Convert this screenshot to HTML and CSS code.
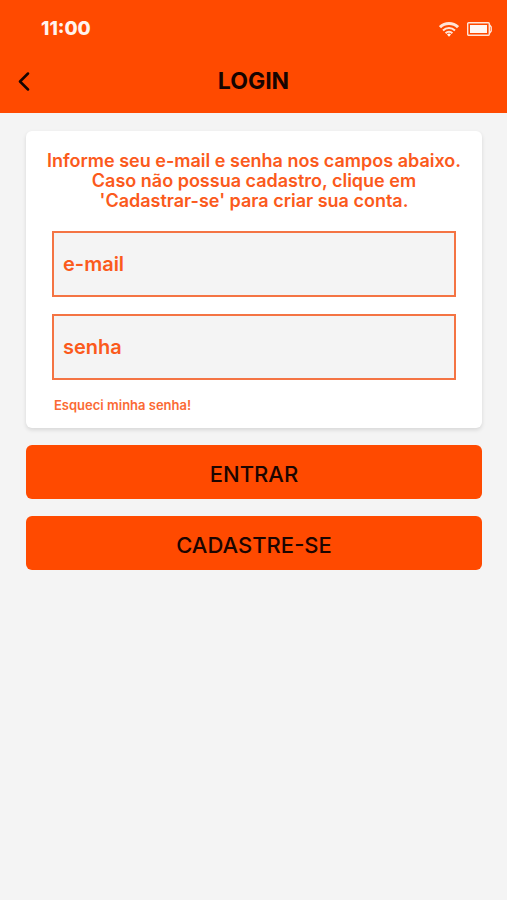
FILE: index.html
```html
<!DOCTYPE html>
<html lang="pt-BR">
<head>
  <meta charset="utf-8">
  <meta name="viewport" content="width=device-width, initial-scale=1">
  <title>Login</title>
  <link rel="stylesheet" href="styles.css">
</head>
<body>
  <header class="header">
    <div class="status">
      <time class="status-time">11:00</time>
      <div class="status-icons">
        <svg class="wifi" viewBox="0 0 20 15" aria-hidden="true">
          <path d="M1 5.2a13 13 0 0 1 18 0" stroke-width="3"/>
          <path d="M4 8.5a8.6 8.6 0 0 1 12 0" stroke-width="2"/>
          <path d="M6.6 11.2a4.8 4.8 0 0 1 6.8 0" stroke-width="2"/>
          <path class="solid" d="M8 12.4a2.9 2.9 0 0 1 4 0L10 14.8z"/>
        </svg>
        <svg class="battery" viewBox="0 0 25 14" aria-hidden="true">
          <rect x=".7" y=".7" width="21.6" height="12.6" rx="1" stroke-width="1.4"/>
          <rect class="solid" x="3" y="3" width="17" height="8"/>
          <path d="M22.3 2.5l1.9 2.5v4l-1.9 2.5" stroke-width="1.4"/>
        </svg>
      </div>
    </div>
    <div class="titlebar">
      <button class="back" type="button" aria-label="Voltar">
        <svg viewBox="0 0 12 20" aria-hidden="true"><path d="M10 2.5L2 10.5l8 8"/></svg>
      </button>
      <h1 class="title">LOGIN</h1>
    </div>
  </header>
  <main>
    <form class="form">
      <section class="card">
        <p class="intro">Informe seu e-mail e senha nos campos abaixo.<br>Caso não possua cadastro, clique em<br>'Cadastrar-se' para criar sua conta.</p>
        <div class="fields">
          <input class="field" type="email" placeholder="e-mail" aria-label="e-mail">
          <input class="field" type="password" placeholder="senha" aria-label="senha">
          <a class="forgot" href="#">Esqueci minha senha!</a>
        </div>
      </section>
      <button class="action" type="submit">ENTRAR</button>
      <button class="action" type="button">CADASTRE-SE</button>
    </form>
  </main>
</body>
</html>
```
FILE: styles.css
```css
* {
  box-sizing: border-box;
}

body {
  margin: 0;
  background: #f4f4f4;
  color: #160400;
  font-family: Inter, "Liberation Sans", sans-serif;
}

.header {
  background: #ff4a00;
  padding: 17px 0 12px;
}

.status {
  display: flex;
  align-items: center;
  justify-content: space-between;
  padding: 0 15px 0 41px;
  color: #fff4ee;
}

.status-time {
  font-size: 19px;
  line-height: 24px;
  font-weight: 800;
}

.status-icons {
  display: flex;
  align-items: center;
  gap: 8px;
}

.status-icons svg {
  fill: none;
  stroke: #ffe4d8;
}

.status-icons .solid {
  fill: #fff8f4;
  stroke: none;
}

.wifi {
  width: 20px;
  height: 15px;
}

.battery {
  width: 25px;
  height: 14px;
}

.titlebar {
  display: grid;
  grid-template-columns: 48px 1fr 48px;
  align-items: center;
  margin-top: 20px;
}

.back {
  display: flex;
  height: 40px;
  padding: 0 0 0 18px;
  align-items: center;
  border: 0;
  background: none;
}

.back svg {
  width: 12px;
  height: 20px;
  fill: none;
  stroke: #160400;
  stroke-width: 2.5;
  stroke-linecap: round;
  stroke-linejoin: round;
}

.title {
  margin: 0;
  text-align: center;
  font-size: 23px;
  line-height: 28px;
  font-weight: 700;
}

.form {
  display: flex;
  flex-direction: column;
  gap: 17px;
  padding: 18px 25px 18px 26px;
}

.card {
  padding: 20px 12px 15px;
  border-radius: 6px;
  background: #fff;
  box-shadow: 0 2px 4px rgba(0, 0, 0, 0.12);
  color: #fb5a1c;
}

.intro {
  margin: 0 0 20px;
  text-align: center;
  font-size: 18px;
  line-height: 20px;
  font-weight: 600;
}

.fields {
  display: flex;
  flex-direction: column;
  align-items: flex-start;
  gap: 17px;
  padding: 0 14px;
}

.field {
  width: 100%;
  height: 66px;
  padding: 0 9px;
  border: 2px solid #f47443;
  border-radius: 0;
  background: #f4f4f4;
  color: #fb5a1c;
  font: 600 20px/24px Inter, "Liberation Sans", sans-serif;
}

.field::placeholder {
  color: #fb5a1c;
  opacity: 1;
}

.forgot {
  padding-left: 2px;
  color: #fb6a34;
  font-size: 13px;
  line-height: 16px;
  font-weight: 600;
  text-decoration: none;
}

.action {
  height: 54px;
  padding: 3px 0 0;
  border: 0;
  border-radius: 6px;
  background: #ff4a00;
  color: #1c0500;
  font: 500 22px/28px Inter, "Liberation Sans", sans-serif;
}
```
